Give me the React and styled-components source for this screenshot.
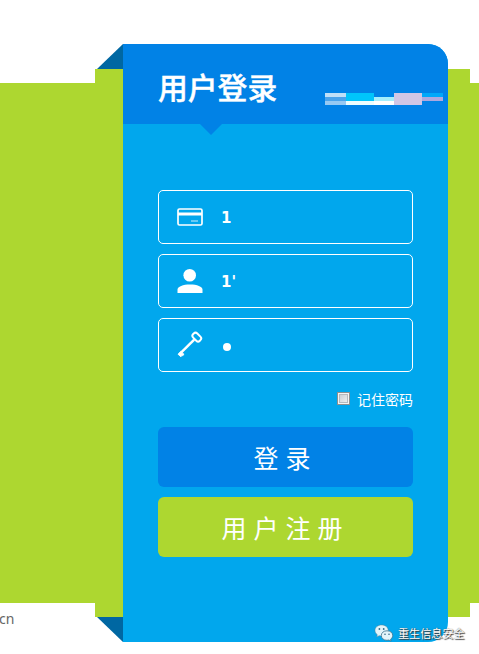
import React from "react";
import styled, { createGlobalStyle } from "styled-components";

const GlobalStyle = createGlobalStyle`
  *, *::before, *::after { box-sizing: border-box; }
  body {
    margin: 0;
    background: #fff;
    overflow: hidden;
    font-family: "Noto Sans CJK SC", sans-serif;
  }
`;

const Page = styled.main`
  position: relative;
  display: grid;
  grid-template-columns: 95px 28px 325px 22px 9px;
  grid-template-rows: 44px 25px 14px 520px 14px 25px 12px;
  width: 479px;
  height: 654px;
  overflow: hidden;
`;

const Band = styled.div`
  grid-column: 1 / -1;
  grid-row: 4;
  background: #add730;
`;

const Ribbon = styled.div`
  grid-column: 2 / 5;
  grid-row: 3 / 6;
  background: #add730;
`;

const Fold = styled.div`
  grid-column: 2;
  grid-row: ${(p) => (p.$bottom ? 6 : 2)};
  justify-self: end;
  width: 26px;
  background: #0067a2;
  clip-path: ${(p) =>
    p.$bottom
      ? "polygon(0 0, 100% 0, 100% 100%)"
      : "polygon(100% 0, 100% 100%, 0 100%)"};
`;

const FooterText = styled.span`
  grid-column: 1;
  grid-row: 5 / 7;
  align-self: start;
  padding-top: 6px;
  margin-left: -1px;
  font: 14px/20px "Noto Sans", sans-serif;
  color: #666;
`;

const Card = styled.section`
  grid-column: 3;
  grid-row: 2 / 7;
  display: flex;
  flex-direction: column;
  background: #01a7ed;
  border-radius: 0 20px 20px 0;
  overflow: hidden;
`;

const Header = styled.header`
  display: flex;
  justify-content: space-between;
  flex: none;
  height: 80px;
  padding: 0 5px 0 35px;
  background: #0182e6;
`;

const Title = styled.h1`
  margin: 0;
  padding-top: 20px;
  font-size: 29.8px;
  line-height: 44px;
  font-weight: 500;
  -webkit-text-stroke: 0.4px #fff;
  color: #fff;
  white-space: nowrap;
`;

const Logo = styled.svg`
  flex: none;
  width: 118px;
  height: 12px;
  margin-top: 49px;
`;

const Pointer = styled.div`
  flex: none;
  width: 22px;
  height: 11px;
  margin-left: 77px;
  background: #0182e6;
  clip-path: polygon(0 0, 100% 0, 50% 100%);
`;

const Form = styled.form`
  display: flex;
  flex-direction: column;
  gap: 10px;
  padding: 55px 35px 0;
`;

const Field = styled.label`
  display: flex;
  align-items: center;
  height: 54px;
  padding-left: 18px;
  border: 1px solid #fff;
  border-radius: 5px;
`;

const FieldIcon = styled.svg`
  flex: none;
  width: 26px;
  height: 28px;
`;

const Value = styled.span`
  padding: 2px 0 0 18px;
  font: bold 15px/20px "DejaVu Sans", sans-serif;
  color: #fff;
`;

const PasswordDot = styled.span`
  width: 8px;
  height: 8px;
  margin: 3px 0 0 20px;
  border-radius: 50%;
  background: #fff;
`;

const Remember = styled.label`
  display: flex;
  justify-content: flex-end;
  align-items: center;
  gap: 7px;
  height: 35px;
  padding-bottom: 2px;
  font-size: 14px;
  line-height: 20px;
  color: #fff;
`;

const Checkbox = styled.span`
  width: 13px;
  height: 13px;
  border: 1px solid #8e8f8f;
  background: linear-gradient(135deg, #c3c8ce, #f6f6f6);
  box-shadow: inset 0 0 0 1px #f4f4f4, inset 0 0 0 2px #b5babf;
`;

const Button = styled.button`
  height: 60px;
  padding: 0 7px 0 0;
  border: 0;
  border-radius: 6px;
  background: ${(p) => (p.$register ? "#add730" : "#0182e6")};
  color: #fff;
  font: 25px/60px "Noto Sans CJK SC", sans-serif;
  word-spacing: 1.4px;
`;

const Watermark = styled.div`
  position: absolute;
  left: 374px;
  top: 623px;
  display: flex;
  align-items: center;
  gap: 4px;
  height: 20px;
  font-size: 11.1px;
  line-height: 20px;
  color: #fff;
  white-space: nowrap;
  text-shadow: 1px 1px 1px #333, 0 0 1px #555;
`;

const WechatMark = styled.svg`
  width: 20px;
  height: 18px;
`;

function CardIcon() {
  return (
    <FieldIcon viewBox="0 0 26 28">
      <rect x="1" y="6" width="24" height="16" rx="1.5" fill="none" stroke="#fff" strokeWidth="1.7" />
      <path d="M1 9.5h24v3H1z" fill="#fff" />
      <path d="M14 17h7v2h-7z" fill="#fff" opacity=".4" />
    </FieldIcon>
  );
}

function UserIcon() {
  return (
    <FieldIcon viewBox="0 0 26 28" fill="#fff">
      <circle cx="12.7" cy="8.3" r="6.3" />
      <path d="M.5 26v-3.2C.5 19.5 6 17.5 13 17.5s12.5 2 12.5 5.300V26z" />
    </FieldIcon>
  );
}

function KeyIcon() {
  return (
    <FieldIcon viewBox="0 0 26 28" fill="none" stroke="#fff">
      <rect x="15.1" y="3.2" width="9.4" height="5.8" rx="2.5" strokeWidth="2" transform="rotate(45 19.8 6.1)" />
      <path d="M17.2 8.7 3.3 22.3" strokeWidth="2.5" />
      <path d="M1 23.2 3.8 20.400l3.300 3-1.400 1.200-.8-.2-1 1.400z" fill="#fff" strokeWidth=".9" strokeLinejoin="round" />
    </FieldIcon>
  );
}

export default function App() {
  return (
    <>
      <GlobalStyle />
      <Page>
        <Band />
        <Ribbon />
        <Fold />
        <Fold $bottom />
        <FooterText>cn</FooterText>
        <Card>
          <Header>
            <Title>用户登录</Title>
            <Logo viewBox="0 0 118 12" shapeRendering="crispEdges">
              <path d="M0 0h21v4H0z" fill="#bfdff8" />
              <path d="M0 4h21v4H0z" fill="#4aa3eb" />
              <path d="M0 8h21v4H0z" fill="#96c9f3" />
              <path d="M21 0h28v8H21z" fill="#00c5fb" />
              <path d="M21 8h28v4H21z" fill="#edfdff" />
              <path d="M49 4h20v4H49z" fill="#a5eefc" />
              <path d="M49 8h20v4H49z" fill="#fff" />
              <path d="M69 0h28v12H69z" fill="#d0c6e5" />
              <path d="M97 0h21v4H97z" fill="#00a8fa" />
              <path d="M97 4h21v4H97z" fill="#aea8de" />
            </Logo>
          </Header>
          <Pointer />
          <Form>
            <Field>
              <CardIcon />
              <Value>1</Value>
            </Field>
            <Field>
              <UserIcon />
              <Value>1'</Value>
            </Field>
            <Field>
              <KeyIcon />
              <PasswordDot />
            </Field>
            <Remember>
              <Checkbox />
              记住密码
            </Remember>
            <Button type="button">登 录</Button>
            <Button type="button" $register>用 户 注 册</Button>
          </Form>
        </Card>
        <Watermark>
          <WechatMark viewBox="0 0 20 18">
            <path d="M7.6 1C3.6 1 1 3.4 1 6.5c0 1.8.9 3.2 2.3 4.2L2.7 13l2.5-1.3c.8.2 1.6.3 2.4.3 3.9 0 6.6-2.4 6.6-5.5S11.5 1 7.6 1z" fill="#e2f5fb" stroke="#527f92" strokeWidth=".5" />
            <path d="M13 6.8c-3.4 0-5.7 2-5.7 4.7s2.3 4.8 5.7 4.8c.7 0 1.3-.1 1.9-.3l2.2 1.2-.5-2c1.3-.9 2.1-2.2 2.1-3.7 0-2.7-2.3-4.7-5.7-4.7z" fill="#e2f5fb" stroke="#3b718b" strokeWidth=".8" />
            <g fill="#356d88">
              <circle cx="5.4" cy="5" r=".9" />
              <circle cx="9.7" cy="5" r=".9" />
              <circle cx="11" cy="10.3" r=".8" />
              <circle cx="15" cy="10.3" r=".8" />
            </g>
          </WechatMark>
          重生信息安全
        </Watermark>
      </Page>
    </>
  );
}
